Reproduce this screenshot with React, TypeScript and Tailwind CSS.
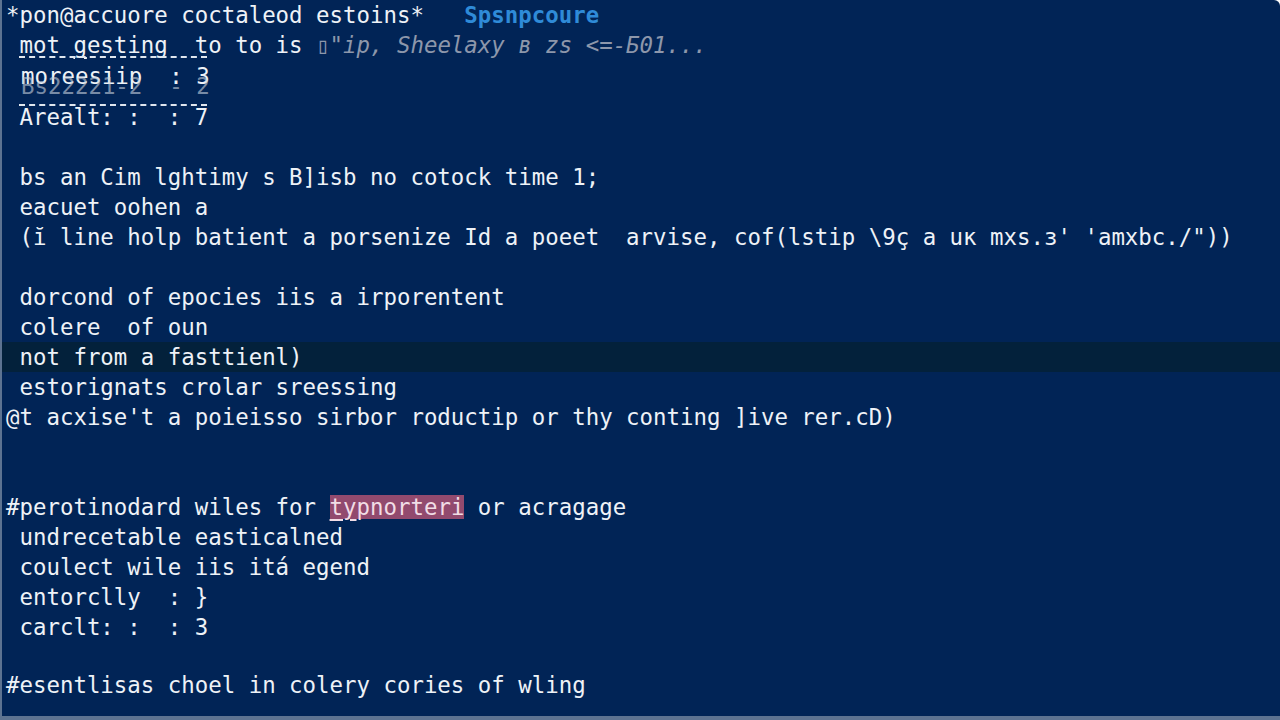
const mono = "font-['DejaVu_Sans_Mono','Liberation_Mono',monospace]";

const topLines = [
  " bs an Cim lghtimy s B]isb no cotock time 1;",
  " eacuet oohen a",
  " (ĭ line holp batient a porsenize Id a poeet  arvise, cof(lstip \\9ç a uк mxs.з' 'amxbc./\"))",
];

const middleLines = [
  { text: " dorcond of epocies iis a irporentent" },
  { text: " colere  of oun" },
  { text: " not from a fasttienl)", current: true },
  { text: " estorignats crolar sreessing" },
  { text: "@t acxise't a poieisso sirbor roductip or thy conting ]ive rer.cD)" },
];

const lowerLines = [
  " undrecetable easticalned",
  " coulect wile iis itá egend",
  " entorclly  : }",
  " carclt: :  : 3",
];

function Line({ children, className = "" }: { children?: React.ReactNode; className?: string }) {
  return <div className={`h-[30px] leading-[30px] whitespace-pre pl-[4px] ${className}`}>{children}</div>;
}

function Blank() {
  return <div className="h-[30px]" />;
}

export default function App() {
  return (
    <div
      className={`w-[1280px] h-[720px] overflow-hidden bg-[#012456] text-[#eef2f7] text-[22.4px] ${mono} border-l-2 border-b-4 border-[#5d7391] rounded-tr-md`}
    >
      {/* Title / header */}
      <Line>
        *pon@accuore coctaleod estoins*{"   "}
        <span className="text-[#2f8bd8] font-semibold">Spsnpcoure</span>
      </Line>
      <Line>
        {" mot "}
        <span className="underline underline-offset-4">g</span>
        {"esting  to to is "}
        <span className="italic text-[#8d97ab]">▯"ip, Sheelaxy в zs &lt;=-Б01...</span>
      </Line>

      {/* Table block */}
      <div className="h-[42px] pl-[17px] flex flex-col justify-between">
        <div className="w-[188px] border-t-2 border-dashed border-[#dfe6ee] -mt-[4px]" />
        <div className="relative h-[24px] whitespace-pre leading-[24px]">
          <span className="absolute left-[2px] top-[-5px]">moreesiip  : 3</span>
          <span className="absolute left-[2px] top-[5px] text-[#c7d0dc] opacity-60">Bs22221-2  - 2</span>
        </div>
        <div className="w-[188px] border-t-2 border-dashed border-[#dfe6ee] mb-[-4px]" />
      </div>
      <Line>{" Arealt: :  : 7"}</Line>
      <Blank />

      {topLines.map((t, i) => (
        <Line key={i}>{t}</Line>
      ))}
      <Blank />

      {middleLines.map((l, i) => (
        <Line key={i} className={l.current ? "bg-[#03213b]" : ""}>
          {l.text}
        </Line>
      ))}
      <Blank />
      <Blank />

      <Line>
        #perotinodard wiles for{" "}
        <span className="bg-[#924a6e] text-[#f1dde6] leading-[24px] inline-block">
          <span className="underline underline-offset-4">ty</span>pnorteri
        </span>{" "}
        or acragage
      </Line>
      {lowerLines.map((t, i) => (
        <Line key={i}>{t}</Line>
      ))}
      <Blank />
      <Line className="-mt-[2px]">#esentlisas choel in colery cories of wling</Line>
    </div>
  );
}
